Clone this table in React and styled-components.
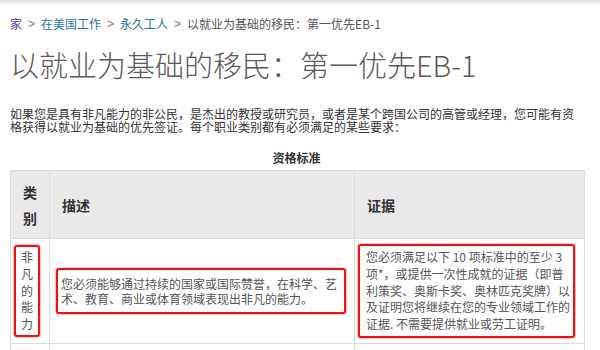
import React from "react";
import styled, { createGlobalStyle } from "styled-components";

const Global = createGlobalStyle`
  html, body { margin: 0; padding: 0; background: #fff; }
  body {
    font-family: "Noto Sans CJK SC", "Liberation Sans", sans-serif;
    color: #444;
    overflow: hidden;
  }
`;

const TopShade = styled.div`
  height: 6px;
  background: linear-gradient(#dcdcdc, rgba(255,255,255,0));
`;

const Page = styled.div`
  padding: 0 10px;
`;

const Crumbs = styled.nav`
  margin-top: 10px;
  font-size: 12px;
  line-height: 16px;
  color: #555;
  white-space: nowrap;
  display: flex;
  gap: 5px;
`;

const CrumbLink = styled.a`
  color: ${(p) => (p.$visited ? "#5b3a8c" : "#2a70aa")};
  text-decoration: none;
`;

const Sep = styled.span`
  color: #777;
  font-family: "Liberation Sans", sans-serif;
  padding: 0 1px;
`;

const Title = styled.h1`
  margin: 14px 0 0;
  font-family: "Noto Sans CJK SC", sans-serif;
  font-size: 29px;
  line-height: 36px;
  font-weight: 200;
  color: #5a5a5a;
  white-space: nowrap;
`;

const Intro = styled.p`
  margin: 26px 0 0;
  font-size: 12px;
  line-height: 12.5px;
  color: #333;
`;

const Caption = styled.div`
  width: 573px;
  margin: 17px 0 4px;
  text-align: center;
  font-size: 12px;
  line-height: 16px;
  font-weight: 700;
  color: #333;
`;

const Table = styled.table`
  width: 574px;
  border-collapse: collapse;
  table-layout: fixed;
`;

const HeadCell = styled.th`
  background: #e9e9e9;
  border: 1px solid #dcdcdc;
  height: 67px;
  padding: 0 ${(p) => (p.$center ? "0" : "12px")};
  text-align: ${(p) => (p.$center ? "center" : "left")};
  vertical-align: middle;
  font-size: 14px;
  line-height: 26px;
  font-weight: 700;
  color: #333;
`;

const Cell = styled.td`
  border: 1px solid #dcdcdc;
  height: ${(p) => p.$h || 104}px;
  padding: ${(p) => p.$pad || "0"};
  vertical-align: middle;
  font-size: 12px;
  color: #555;
`;

const Highlight = styled.div`
  border: 2px solid #f01212;
  box-shadow: 0 0 0 0.6px rgba(240, 18, 18, 0.45);
  border-radius: 3px;
  padding: ${(p) => p.$pad};
  line-height: ${(p) => p.$lh}px;
  text-align: ${(p) => p.$align || "left"};
  width: ${(p) => (p.$w ? `${p.$w}px` : "auto")};
  box-sizing: border-box;
  white-space: nowrap;
`;

export default function App() {
  return (
    <>
      <Global />
      <TopShade />
      <Page>
        <Crumbs>
          <CrumbLink $visited href="#">家</CrumbLink>
          <Sep>&gt;</Sep>
          <CrumbLink href="#">在美国工作</CrumbLink>
          <Sep>&gt;</Sep>
          <CrumbLink href="#">永久工人</CrumbLink>
          <Sep>&gt;</Sep>
          <span>以就业为基础的移民：第一优先EB-1</span>
        </Crumbs>
        <Title>以就业为基础的移民：第一优先EB-1</Title>
        <Intro>
          如果您是具有非凡能力的非公民，是杰出的教授或研究员，或者是某个跨国公司的高管或经理，您可能有资
          <br />
          格获得以就业为基础的优先签证。每个职业类别都有必须满足的某些要求：
        </Intro>
        <Caption>资格标准</Caption>
        <Table>
          <colgroup>
            <col style={{ width: 39 }} />
            <col style={{ width: 305 }} />
            <col style={{ width: 230 }} />
          </colgroup>
          <thead>
            <tr>
              <HeadCell $center>
                类<br />别
              </HeadCell>
              <HeadCell>描述</HeadCell>
              <HeadCell>证据</HeadCell>
            </tr>
          </thead>
          <tbody>
            <tr>
              <Cell $pad="0 0 0 3px">
                <Highlight $w={26} $lh={16.7} $pad="2px 0" $align="center">
                  非<br />凡<br />的<br />能<br />力
                </Highlight>
              </Cell>
              <Cell $pad="0 8px 0 6px">
                <Highlight $lh={15} $pad="6px 3px">
                  您必须能够通过持续的国家或国际赞誉，在科学、艺
                  <br />
                  术、教育、商业或体育领域表现出非凡的能力。
                </Highlight>
              </Cell>
              <Cell $pad="0 9px 0 3px">
                <Highlight $lh={16.7} $pad="3px 0 3px 6px">
                  您必须满足以下 10 项标准中的至少 3
                  <br />
                  项*，或提供一次性成就的证据（即普
                  <br />
                  利策奖、奥斯卡奖、奥林匹克奖牌）以
                  <br />
                  及证明您将继续在您的专业领域工作的
                  <br />
                  证据. 不需要提供就业或劳工证明。
                </Highlight>
              </Cell>
            </tr>
            <tr>
              <Cell $h={40} />
              <Cell $h={40} />
              <Cell $h={40} />
            </tr>
          </tbody>
        </Table>
      </Page>
    </>
  );
}
